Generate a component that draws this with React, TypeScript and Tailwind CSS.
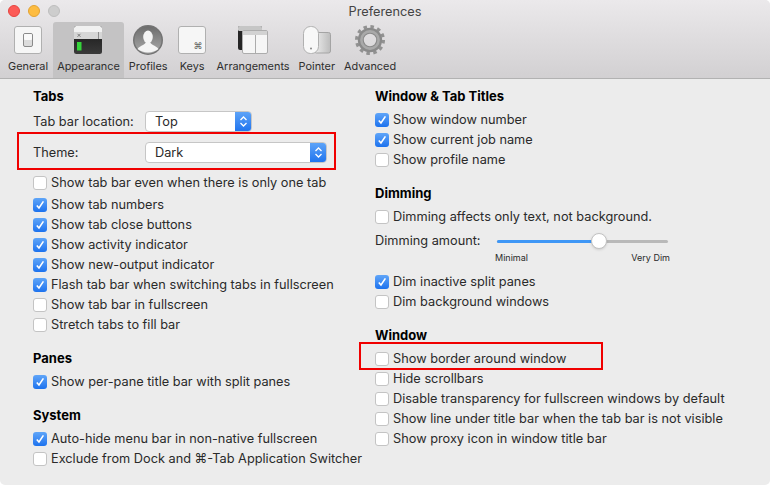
const font = "font-['Inter','Liberation_Sans',sans-serif]"

function Check({ on, label }: { on?: boolean; label: string }) {
  return (
    <div className="flex items-center h-5 gap-[4px] whitespace-nowrap">
      {on ? (
        <span className="w-[14px] h-[14px] rounded-[3px] bg-gradient-to-b from-[#5fa5f8] to-[#1b72ee] flex items-center justify-center">
          <svg width="10" height="10" viewBox="0 0 10 10" fill="none">
            <path d="M1.8 5.4 L4 8 L8.4 1.4" stroke="white" strokeWidth="1.6" />
          </svg>
        </span>
      ) : (
        <span className="w-[14px] h-[14px] rounded-[3px] bg-white border border-[#c4c4c4]" />
      )}
      <span>{label}</span>
    </div>
  )
}

function Heading({ children }: { children: string }) {
  return <div className="font-bold text-[13px] text-black h-5 leading-5">{children}</div>
}

function Select({ value, width }: { value: string; width: string }) {
  return (
    <div className={`${width} h-[21px] rounded-[4px] bg-white border border-[#c6c6c6] flex items-center justify-between overflow-hidden`}>
      <span className="pl-[9px]">{value}</span>
      <span className="w-4 h-[21px] bg-gradient-to-b from-[#5fa5f8] to-[#1b72ee] flex items-center justify-center">
        <svg width="9" height="13" viewBox="0 0 9 13" fill="none" stroke="white" strokeWidth="1.3">
          <path d="M1.5 5 L4.5 2 L7.5 5" />
          <path d="M1.5 8 L4.5 11 L7.5 8" />
        </svg>
      </span>
    </div>
  )
}

function ToolItem({ label, active, wide, children }: { label: string; active?: boolean; wide?: boolean; children: React.ReactNode }) {
  return (
    <div className={`flex flex-col items-center h-[56px] px-[4px] ${active ? 'bg-[#c4c3c4] rounded-t-[3px]' : ''} ${wide ? 'min-w-[39px]' : ''}`}>
      <div className="h-[36px] flex items-center justify-center">{children}</div>
      <span className="text-[10.9px] leading-4 text-[#2e2e2e] whitespace-nowrap">{label}</span>
    </div>
  )
}

export default function App() {
  return (
    <div className={`${font} w-[770px] h-[485px] relative bg-[#ececec] rounded-[5px] overflow-hidden text-[12.75px] text-[#2a2a2a]`}>
      <div className="h-[79px] bg-gradient-to-b from-[#ebe9eb] to-[#d2d0d2] border-b border-[#b2b2b2]">
        <div className="h-[22px] relative flex items-center justify-center pt-[2px]">
          <div className="absolute left-[8px] top-[5px] flex gap-[8px]">
            <span className="w-3 h-3 rounded-full bg-[#fc5b57] border border-[#e5443f]" />
            <span className="w-3 h-3 rounded-full bg-[#fdbc40] border border-[#e2a232]" />
            <span className="w-3 h-3 rounded-full bg-[#cdcdcd] border border-[#bdbdbd]" />
          </div>
          <span className="text-[#444]">Preferences</span>
        </div>
        <div className="flex pl-[4px] gap-[1px]">
          <ToolItem label="General">
            <svg width="28" height="28" viewBox="0 0 28 28">
              <rect x="0.5" y="0.5" width="27" height="27" rx="2.5" fill="#f6f6f6" stroke="#b0b0b0" />
              <rect x="9.5" y="7.5" width="9" height="13" rx="1.5" fill="#dcdcdc" stroke="#8a8a8a" />
              <rect x="10" y="8" width="8" height="6" rx="1" fill="#fafafa" />
            </svg>
          </ToolItem>
          <ToolItem label="Appearance" active>
            <svg width="28" height="28" viewBox="0 0 28 28">
              <defs>
                <linearGradient id="term" x1="0" y1="0" x2="0" y2="1">
                  <stop offset="0" stopColor="#161616" />
                  <stop offset="1" stopColor="#3a3a3a" />
                </linearGradient>
              </defs>
              <rect width="28" height="28" rx="2.5" fill="url(#term)" />
              <path d="M0 13 V2.5 A2.5 2.5 0 0 1 2.5 0 H25.5 A2.5 2.5 0 0 1 28 2.5 V13 Z" fill="#f1f1f1" />
              <rect x="0" y="6" width="28" height="7" fill="#d6d6d6" />
              <path d="M24.5 6 V13" stroke="#8c8c8c" />
              <path d="M3.5 7.8 L6.5 10.8 M6.5 7.8 L3.5 10.8" stroke="#666" strokeWidth="0.8" />
              <rect x="3" y="16" width="4.5" height="8.5" fill="#35d43a" />
            </svg>
          </ToolItem>
          <ToolItem label="Profiles">
            <svg width="30" height="30" viewBox="0 0 30 30">
              <defs>
                <linearGradient id="face" x1="0" y1="0" x2="0" y2="1">
                  <stop offset="0" stopColor="#6d6d6d" />
                  <stop offset="1" stopColor="#a9a9a9" />
                </linearGradient>
              </defs>
              <circle cx="15" cy="15" r="15" fill="#737373" />
              <circle cx="15" cy="15" r="13.5" fill="url(#face)" />
              <ellipse cx="15" cy="12" rx="4.8" ry="6.5" fill="#f4f4f4" />
              <path d="M4.5 24 C7 20.5 11 20.5 12.8 17.5 H17.2 C19 20.5 23 20.5 25.5 24 C20 28.5 10 28.5 4.5 24 Z" fill="#f4f4f4" />
            </svg>
          </ToolItem>
          <ToolItem label="Keys" wide>
            <svg width="28" height="28" viewBox="0 0 28 28">
              <rect x="0.5" y="0.5" width="27" height="27" rx="2.5" fill="#f6f6f6" stroke="#b0b0b0" />
              <text x="20" y="23" textAnchor="middle" fontSize="9" fill="#666">⌘</text>
            </svg>
          </ToolItem>
          <ToolItem label="Arrangements">
            <svg width="30" height="28" viewBox="0 0 30 28">
              <rect x="0" y="0" width="24" height="24" rx="2" fill="#262626" />
              <rect x="0" y="0" width="24" height="5" rx="1.5" fill="#c6c6c6" />
              <rect x="4.5" y="4.5" width="25" height="23" rx="1.5" fill="#f6f6f6" stroke="#acacac" />
              <rect x="5" y="5" width="24" height="4" fill="#d2d2d2" />
              <path d="M17.5 9 V27" stroke="#acacac" />
            </svg>
          </ToolItem>
          <ToolItem label="Pointer">
            <svg width="28" height="28" viewBox="0 0 28 28">
              <defs>
                <linearGradient id="pad" x1="0" y1="0" x2="1" y2="0">
                  <stop offset="0" stopColor="#ededed" />
                  <stop offset="1" stopColor="#bcbcbc" />
                </linearGradient>
              </defs>
              <rect x="11.5" y="6.5" width="16" height="20.5" rx="2" fill="url(#pad)" stroke="#a4a4a4" />
              <rect x="0.5" y="0.5" width="15" height="27" rx="7" fill="#f8f8f8" stroke="#b0b0b0" />
              <circle cx="8" cy="22.5" r="1" fill="#888" />
            </svg>
          </ToolItem>
          <ToolItem label="Advanced">
            <svg width="30" height="30" viewBox="0 0 30 30">
              <circle cx="15" cy="15" r="13.4" fill="none" stroke="#929292" strokeWidth="3.2" strokeDasharray="3.5 3.52" />
              <circle cx="15" cy="15" r="9.2" fill="none" stroke="#8a8a8a" strokeWidth="6" />
              <circle cx="15" cy="15" r="8.6" fill="none" stroke="#a9a9a9" strokeWidth="2.6" />
            </svg>
          </ToolItem>
        </div>
      </div>

      <div className="grid grid-cols-[342px_1fr] pl-[33px] pt-[7px]">
        <div>
          <Heading>Tabs</Heading>
          <div className="flex items-center h-[21px] mt-[5px]">
            <span className="w-[112px] whitespace-nowrap">Tab bar location:</span>
            <Select value="Top" width="w-[107px]" />
          </div>
          <div className="flex items-center h-[21px] mt-[10px]">
            <span className="w-[112px]">Theme:</span>
            <Select value="Dark" width="w-[182px]" />
          </div>
          <div className="mt-[10px]">
            <Check label="Show tab bar even when there is only one tab" />
          </div>
          <div className="mt-[2px]">
            <Check on label="Show tab numbers" />
            <Check on label="Show tab close buttons" />
            <Check on label="Show activity indicator" />
            <Check on label="Show new-output indicator" />
            <Check on label="Flash tab bar when switching tabs in fullscreen" />
            <Check label="Show tab bar in fullscreen" />
            <Check label="Stretch tabs to fill bar" />
          </div>
          <div className="mt-[13px]"><Heading>Panes</Heading></div>
          <div className="mt-[4px]"><Check on label="Show per-pane title bar with split panes" /></div>
          <div className="mt-[13px]"><Heading>System</Heading></div>
          <div className="mt-[4px]">
            <Check on label="Auto-hide menu bar in non-native fullscreen" />
            <Check label="Exclude from Dock and ⌘-Tab Application Switcher" />
          </div>
        </div>

        <div>
          <Heading>Window &amp; Tab Titles</Heading>
          <div className="mt-[4px]">
            <Check on label="Show window number" />
            <Check on label="Show current job name" />
            <Check label="Show profile name" />
          </div>
          <div className="mt-[13px]"><Heading>Dimming</Heading></div>
          <div className="mt-[4px]"><Check label="Dimming affects only text, not background." /></div>
          <div className="flex items-center h-5 mt-[4px]">
            <span className="w-[122px]">Dimming amount:</span>
            <div className="w-[171px] h-[3px] rounded-full bg-[#b9b9b9] relative">
              <div className="h-[3px] w-[102px] rounded-full bg-[#3f97f6]" />
              <span className="absolute left-[94px] top-[-7px] w-[16px] h-[16px] rounded-full bg-white border border-[#c2c2c2] shadow-sm" />
            </div>
          </div>
          <div className="flex justify-between w-[175px] ml-[120px] text-[9px] h-3 leading-3 mt-[1px]">
            <span>Minimal</span>
            <span>Very Dim</span>
          </div>
          <div className="mt-[8px]">
            <Check on label="Dim inactive split panes" />
            <Check label="Dim background windows" />
          </div>
          <div className="mt-[13px]"><Heading>Window</Heading></div>
          <div className="mt-[4px]">
            <Check label="Show border around window" />
            <Check label="Hide scrollbars" />
            <Check label="Disable transparency for fullscreen windows by default" />
            <Check label="Show line under title bar when the tab bar is not visible" />
            <Check label="Show proxy icon in window title bar" />
          </div>
        </div>
      </div>

      <div className="absolute left-[17px] top-[132px] w-[319px] h-[38px] border-2 border-[#f00000]" />
      <div className="absolute left-[359px] top-[342px] w-[244px] h-[28px] border-2 border-[#f00000]" />
    </div>
  )
}
